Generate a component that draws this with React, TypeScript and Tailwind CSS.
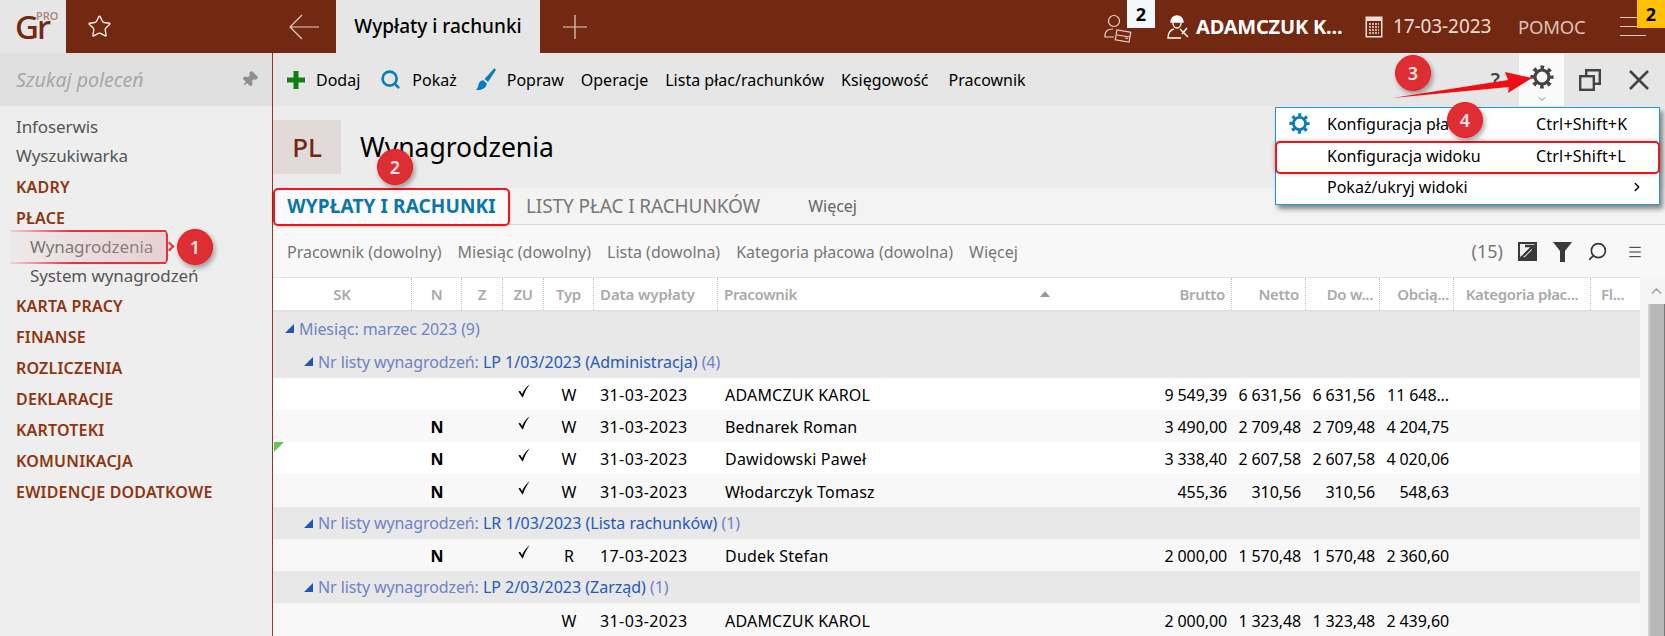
import { Search, Star, Pin, ChevronUp, ChevronDown, ChevronRight, Menu } from "lucide-react"
import type { ReactNode } from "react"

const cols = "grid grid-cols-[139px_50px_41px_41px_50px_124px_439px_75px_74px_74px_74px_137px_49px]"

const sideTop = ["Infoserwis", "Wyszukiwarka"]
const sideBottom = ["KARTA PRACY", "FINANSE", "ROZLICZENIA", "DEKLARACJE", "KARTOTEKI", "KOMUNIKACJA", "EWIDENCJE DODATKOWE"]

const headers = [
  { label: "SK", cls: "justify-center" },
  { label: "N", cls: "justify-center" },
  { label: "Z", cls: "justify-center" },
  { label: "ZU", cls: "justify-center" },
  { label: "Typ", cls: "justify-center" },
  { label: "Data wypłaty", cls: "pl-[6px] tracking-[-0.1px]" },
  { label: "Pracownik", cls: "pl-[6px] !border-r-0" },
  { label: "Brutto", cls: "justify-end pr-[6px]" },
  { label: "Netto", cls: "justify-end pr-[6px]" },
  { label: "Do w...", cls: "justify-end pr-[6px]" },
  { label: "Obcią...", cls: "justify-end pr-[4px]" },
  { label: "Kategoria płac...", cls: "justify-center" },
  { label: "Fl...", cls: "pl-[10px]" },
]

function Gear(props: { size: number; color: string; cls?: string }) {
  return (
    <svg width={props.size} height={props.size} viewBox="0 0 24 24" fill="none" stroke={props.color} className={props.cls}>
      <circle cx="12" cy="12" r="7" strokeWidth="3.2" />
      <circle cx="12" cy="12" r="9.6" strokeWidth="4" strokeDasharray="3.6 3.94" strokeDashoffset="1.8" />
    </svg>
  )
}

function CheckMark() {
  return (
    <svg width="12" height="14" viewBox="0 0 12 14" className="mx-auto mb-[8px]">
      <path d="M0.5 7.5 2 6.800 4.200 10C6 5.800 8.400 2.400 11.600 0.400 9 3.600 6.400 8.600 5 13.200H4.200Z" fill="#000" />
    </svg>
  )
}

function Row(props: { n?: boolean; check?: boolean; typ: string; date: string; name: string; vals: string[]; alt?: boolean; tall?: boolean }) {
  return (
    <div className={`${cols} w-[1367px] items-center pt-[2px] text-[16px] text-black ${props.tall ? "h-[33px]" : "h-[32px]"} ${props.alt ? "bg-[#f8f8f8]" : "bg-white"}`}>
      <div />
      <div className="text-center font-bold">{props.n ? "N" : ""}</div>
      <div />
      <div>{props.check ? <CheckMark /> : null}</div>
      <div className="text-center">{props.typ}</div>
      <div className="pl-[6px] tracking-[0.4px]">{props.date}</div>
      <div className="pl-[7px] tracking-[0.2px]">{props.name}</div>
      {props.vals.map((v, i) => (
        <div key={i} className="whitespace-nowrap pr-[5px] text-right tracking-[-0.1px]">{v}</div>
      ))}
    </div>
  )
}

function Group(props: { level: number; label?: string; value?: string; count: string; tall?: boolean }) {
  return (
    <div className={`flex w-[1367px] items-center bg-[#e8e8e8] text-[16px] tracking-[-0.1px] text-[#6f83c9] ${props.tall ? "h-[33px]" : "h-[32px]"} ${props.level === 1 ? "pl-[12px]" : "pl-[31px]"}`}>
      <svg width="9" height="9" viewBox="0 0 9 9" className="mr-[5px]"><path d="M9 0V9H0Z" fill="#1f55b8" /></svg>
      {props.label ? <span>{props.label}&nbsp;</span> : null}
      {props.value ? <span className="tracking-[0px] text-[#2459bd]">{props.value}&nbsp;</span> : null}
      <span>{props.count}</span>
    </div>
  )
}

function Callout(props: { n: number; cls: string }) {
  return (
    <div className={`absolute flex h-[36px] w-[36px] items-center justify-center rounded-full border border-[#f11] bg-[#dd2f33] text-[18px] font-semibold text-[#fbe4e4] shadow-[2px_3px_5px_rgba(0,0,0,0.35)] ${props.cls}`}>
      {props.n}
    </div>
  )
}

function ToolItem(props: { icon?: ReactNode; label: string; cls?: string }) {
  return (
    <div className={`flex items-center gap-[11px] ${props.cls ?? ""}`}>
      {props.icon}
      <span>{props.label}</span>
    </div>
  )
}

export default function App() {
  return (
    <div className="relative h-[636px] w-[1665px] overflow-hidden bg-[#f2f2f2] font-['Noto_Sans',sans-serif]">
      {/* top bar */}
      <div className="flex h-[53px] items-stretch bg-[#732811] text-white">
        <div className="relative flex w-[66px] items-center bg-[#e6e6e6] pl-[15px]">
          <span className="text-[33px] font-medium leading-none tracking-[-2px] text-[#732811]">Gr</span>
          <span className="absolute left-[36px] top-[9px] text-[11px] font-semibold leading-[14px] text-[#b08a7e]">PRO</span>
        </div>
        <div className="flex w-[223px] items-center pl-[21px]">
          <Star size={25} strokeWidth={1.3} className="text-[#fbeee8]" />
        </div>
        <div className="flex w-[47px] items-center">
          <svg width="30" height="26" viewBox="0 0 30 26" fill="none" stroke="#e8cfc6" strokeWidth="1.2"><path d="M30 13H1M13 1 1 13l12 12" /></svg>
        </div>
        <div className="flex w-[204px] items-center justify-center bg-[#e6e6e6] text-[19px] font-medium text-black">Wypłaty i rachunki</div>
        <div className="flex flex-1 items-center pl-[23px]">
          <svg width="24" height="24" viewBox="0 0 24 24" fill="none" stroke="#e8cfc6" strokeWidth="1.2"><path d="M12 0v24M0 12h24" /></svg>
        </div>
        <div className="flex items-center text-[#f0ddd6]">
          <svg width="28" height="30" viewBox="0 0 28 30" fill="none" stroke="#ecd5cc" strokeWidth="1.2" className="mt-[4px]">
            <circle cx="10" cy="7" r="5.5" />
            <path d="M9 15c-5 0-8 2-8 6v2h9" />
            <rect x="12" y="17" width="14" height="10" transform="rotate(10 19 22)" />
            <path d="M13 21l13 2M21 24l3 .5" />
          </svg>
          <div className="mb-[25px] ml-[-5px] flex h-[28px] w-[28px] items-center justify-center bg-[#f3f8fc] text-[18px] font-bold text-black">2</div>
          <svg width="24" height="26" viewBox="0 0 24 26" fill="none" stroke="#fff" strokeWidth="1.4" className="ml-[11px]">
            <path d="M5 8c0-4 3-6 6-6s6 2 6 6z" fill="#fff" />
            <path d="M7 9c0 3 2 5 4 5s4-2 4-5M8 15c-4 1-6 4-6 9h13M14 15l8 8M21 14l-5 6" />
          </svg>
          <span className="ml-[6px] w-[147px] whitespace-nowrap text-[20px] font-bold tracking-[-0.2px] text-white">ADAMCZUK K...</span>
          <svg width="18" height="22" viewBox="0 0 18 22" className="ml-[22px]">
            <rect x="0.5" y="0.5" width="17" height="21" fill="#f0ddd6" />
            <rect x="2" y="5" width="14" height="15" fill="#732811" />
            <path d="M4 8h10M4 11h10M4 14h10M4 17h10" stroke="#f0ddd6" strokeWidth="1.6" strokeDasharray="2 1" />
          </svg>
          <span className="ml-[10px] w-[98px] whitespace-nowrap text-[19px] tracking-[-0.1px]">17-03-2023</span>
          <span className="ml-[27px] w-[70px] text-[18.5px] tracking-[-0.2px] text-[#dcc2b8]">POMOC</span>
          <div className="ml-[32px] flex w-[26px] flex-col gap-[8px]">
            <div className="h-[1px] bg-[#e0c8bd]" />
            <div className="h-[1px] bg-[#e0c8bd]" />
            <div className="h-[1px] bg-[#e0c8bd]" />
          </div>
          <div className="mb-[25px] ml-[-9px] flex h-[28px] w-[28px] items-center justify-center bg-[#ffc000] text-[18px] font-bold text-black">2</div>
        </div>
      </div>

      <div className="flex h-[583px]">
        {/* sidebar */}
        <aside className="w-[272px] shrink-0 bg-[#eeeeee]">
          <div className="flex h-[53px] items-center justify-between bg-[#e0e0e0] pl-[16px] pr-[14px]">
            <span className="text-[19.5px] italic text-[#a8a8a8]">Szukaj poleceń</span>
            <Pin size={17} className="rotate-45 fill-[#8f8f8f] text-[#8f8f8f]" />
          </div>
          <div className="pl-[16px] pt-[6px] text-[17px] tracking-[-0.1px] text-[#555]">
            <div className="flex h-[29px] items-center">{sideTop[0]}</div>
            <div className="flex h-[30px] items-center">{sideTop[1]}</div>
            <div className="flex h-[31px] items-center text-[16px] font-semibold tracking-[0.2px] text-[#8f3510]">KADRY</div>
            <div className="flex h-[31px] items-center text-[16px] font-semibold tracking-[0.2px] text-[#8f3510]">PŁACE</div>
            <div className="flex h-[28px] items-center pl-[14px]">Wynagrodzenia</div>
            <div className="flex h-[29px] items-center pl-[14px]">System wynagrodzeń</div>
            {sideBottom.map((s) => (
              <div key={s} className="flex h-[31px] items-center text-[16px] font-semibold tracking-[0.2px] text-[#8f3510]">{s}</div>
            ))}
          </div>
        </aside>

        {/* main */}
        <main className="w-[1393px] border-l border-[#8b3a24]">
          <div className="flex h-[53px] items-center bg-[#e6e6e6] pl-[14px] pr-[15px] text-[16px] text-black">
            <ToolItem
              icon={<svg width="18" height="18" viewBox="0 0 18 18"><path d="M9 0v18M0 9h18" stroke="#108010" strokeWidth="5" /></svg>}
              label="Dodaj"
            />
            <ToolItem cls="ml-[20px]" icon={<Search size={21} strokeWidth={3} className="text-[#0a7db8]" />} label="Pokaż" />
            <ToolItem
              cls="ml-[18px]"
              icon={
                <svg width="21" height="23" viewBox="0 0 21 23" fill="#0a7db8">
                  <path d="M19 0.5c1.2-.2 2 .8 1.6 2L13 14 9.6 11z" />
                  <path d="M8.6 12.400l3.200 3c-.4 4.400-4.400 7-11 6.600 2.600-1.800 2-4.200 3.200-6.800 1-2 2.800-3 4.600-2.800z" />
                </svg>
              }
              label="Popraw"
            />
            <span className="ml-[17px]">Operacje</span>
            <span className="ml-[17px]">Lista płac/rachunków</span>
            <span className="ml-[17px]">Księgowość</span>
            <span className="ml-[20px]">Pracownik</span>
            <span className="ml-auto text-[20px] font-semibold text-[#444]">?</span>
            <div className="relative ml-[19px] flex h-full w-[45px] items-center justify-center bg-[#fafafa]">
              <Gear size={24} color="#444" cls="mb-[6px]" />
              <ChevronDown size={12} className="absolute bottom-[1px] text-[#888]" />
            </div>
            <svg width="22" height="22" viewBox="0 0 22 22" fill="none" stroke="#444" strokeWidth="2.400" className="ml-[15px]">
              <rect x="1.200" y="7.200" width="13.600" height="13.600" />
              <path d="M7.200 7V1.200h13.600v13.600H15" />
            </svg>
            <svg width="22" height="22" viewBox="0 0 22 22" fill="none" stroke="#444" strokeWidth="2.600" className="ml-[27px]">
              <path d="M2 2l18 18M20 2 2 20" />
            </svg>
          </div>

          <div className="flex h-[82px] flex-col bg-[#ececec]">
            <div className="mt-[14px] flex items-center">
              <div className="flex h-[54px] w-[68px] items-center justify-center bg-[#e2dad8] text-[26px] font-medium text-[#732811]">PL</div>
              <span className="ml-[19px] pt-[1px] text-[26.5px] text-black">Wynagrodzenia</span>
            </div>
          </div>

          <div className="flex h-[37px] items-center border-b border-[#d8d8d8] bg-[#f3f3f3] text-[19px]">
            <div className="flex h-full w-[237px] items-center justify-center bg-[#fafafa] font-bold tracking-[0.1px] text-[#0b76ab]">WYPŁATY I RACHUNKI</div>
            <span className="ml-[16px] tracking-[-0.1px] text-[#777]">LISTY PŁAC I RACHUNKÓW</span>
            <span className="ml-[48px] text-[16px] text-[#666]">Więcej</span>
          </div>

          <div className="flex h-[52px] items-center bg-[#f8f8f8] pl-[14px] pr-[22px] pt-[1px] text-[16px] text-[#777]">
            <span>Pracownik (dowolny)</span>
            <span className="ml-[16px]">Miesiąc (dowolny)</span>
            <span className="ml-[16px]">Lista (dowolna)</span>
            <span className="ml-[16px]">Kategoria płacowa (dowolna)</span>
            <span className="ml-[16px]">Więcej</span>
            <span className="ml-auto text-[18px]">(15)</span>
            <svg width="19" height="19" viewBox="0 0 19 19" className="ml-[15px]">
              <rect width="19" height="19" fill="#3a3a3a" />
              <path d="M2 2h15L2 15z" fill="#f0f0f0" />
              <path d="M15 4 5 14" fill="none" stroke="#fff" strokeWidth="4" />
              <path d="M7 4h8v8M15 4 5 14" fill="none" stroke="#3a3a3a" strokeWidth="2.400" />
            </svg>
            <svg width="19" height="20" viewBox="0 0 19 20" className="ml-[16px]"><path d="M0 0h19l-7 9v11H7V9z" fill="#3a3a3a" /></svg>
            <Search size={21} strokeWidth={1.8} className="ml-[15px] -scale-x-100 text-[#333]" />
            <Menu size={16} strokeWidth={1.5} className="ml-[19px] text-[#333]" />
          </div>

          <div className="flex">
            <div>
              <div className={`${cols} h-[35px] w-[1367px] border-b-2 border-t border-[#e2e2e2] bg-white text-[15px] font-semibold tracking-[-0.3px] text-[#aaaaaa]`}>
                {headers.map((h, i) => (
                  <div key={h.label} className={`flex items-center whitespace-nowrap ${i < 12 ? "border-r border-dotted border-r-[#c4c4c4]" : ""} ${h.cls}`}>
                    {h.label}
                    {h.label === "Pracownik" ? (
                      <svg width="10" height="6" viewBox="0 0 10 6" className="ml-[243px]"><path d="M5 0l5 6H0z" fill="#999" /></svg>
                    ) : null}
                  </div>
                ))}
              </div>
              <Group tall level={1} label="Miesiąc: marzec 2023" count="(9)" />
              <Group tall level={2} label="Nr listy wynagrodzeń:" value="LP 1/03/2023 (Administracja)" count="(4)" />
              <Row check typ="W" date="31-03-2023" name="ADAMCZUK KAROL" vals={["9 549,39", "6 631,56", "6 631,56", "11 648..."]} />
              <Row alt n check typ="W" date="31-03-2023" name="Bednarek Roman" vals={["3 490,00", "2 709,48", "2 709,48", "4 204,75"]} />
              <div className="relative">
                <Row n check typ="W" date="31-03-2023" name="Dawidowski Paweł" vals={["3 338,40", "2 607,58", "2 607,58", "4 020,06"]} />
                <div className="absolute left-[1px] top-0 h-0 w-0 border-r-[10px] border-t-[10px] border-r-transparent border-t-[#66c455]" />
              </div>
              <Row alt tall n check typ="W" date="31-03-2023" name="Włodarczyk Tomasz" vals={["455,36", "310,56", "310,56", "548,63"]} />
              <Group level={2} label="Nr listy wynagrodzeń:" value="LR 1/03/2023 (Lista rachunków)" count="(1)" />
              <Row alt n check typ="R" date="17-03-2023" name="Dudek Stefan" vals={["2 000,00", "1 570,48", "1 570,48", "2 360,60"]} />
              <Group level={2} label="Nr listy wynagrodzeń:" value="LP 2/03/2023 (Zarząd)" count="(1)" />
              <Row alt tall typ="W" date="31-03-2023" name="ADAMCZUK KAROL" vals={["2 000,00", "1 323,48", "1 323,48", "2 439,60"]} />
            </div>
            <div className="flex w-[25px] flex-col items-end bg-[#f5f5f5]">
              <div className="flex h-[27px] w-[17px] items-center justify-center">
                <ChevronUp size={18} className="text-[#aaa]" />
              </div>
              <div className="h-[332px] w-[17px] border-l-2 border-r border-l-[#d0d0d0] border-r-[#777] bg-[#b8b8b8]" />
            </div>
          </div>
        </main>
      </div>

      {/* dropdown menu */}
      <div className="absolute left-[1275px] top-[107px] w-[385px] border border-[#1c9ad6] bg-white text-[16px] text-black shadow-[3px_4px_5px_rgba(0,0,0,0.45)]">
        <div className="flex h-[33px] items-center pb-[2px]">
          <Gear size={21} color="#0a7db8" cls="ml-[13px]" />
          <span className="ml-[17px] w-[209px]">Konfiguracja płac</span>
          <span className="tracking-[0.2px]">Ctrl+Shift+K</span>
        </div>
        <div className="flex h-[32px] items-center pb-[2px] pl-[51px]">
          <span className="w-[209px]">Konfiguracja widoku</span>
          <span className="tracking-[0.2px]">Ctrl+Shift+L</span>
        </div>
        <div className="flex h-[31px] items-center justify-between pb-[4px] pl-[51px] pr-[15px]">
          <span>Pokaż/ukryj widoki</span>
          <ChevronRight size={14} strokeWidth={2.5} />
        </div>
      </div>

      {/* annotations */}
      <div className="absolute left-[1275px] top-[141px] h-[33px] w-[385px] rounded-[5px] border-2 border-[#e8171f] shadow-[0_0_4px_rgba(0,0,0,0.25)]" />
      <div className="absolute left-[273px] top-[188px] h-[38px] w-[237px] rounded-[5px] border-2 border-[#f0141c] shadow-[0_1px_3px_rgba(0,0,0,0.2)]" />
      <div className="absolute left-[10px] top-[230px] h-[34px] w-[158px] rounded-r-[5px] border-r-2 border-[#e8303a] bg-gradient-to-r from-[#e8d8d8]/20 to-[#e0b4b6]/50">
        <div className="h-[2px] bg-gradient-to-r from-[#e8303a]/10 to-[#e8303a] to-40%" />
        <div className="absolute bottom-0 h-[2px] w-full bg-gradient-to-r from-[#e8303a]/10 to-[#e8303a] to-40%" />
      </div>
      <div className="absolute left-[166px] top-[243px] h-[7px] w-[7px] rotate-45 border-r-2 border-t-2 border-[#e8303a]" />
      <Callout n={1} cls="left-[177px] top-[229px]" />
      <Callout n={2} cls="left-[377px] top-[149px]" />
      <Callout n={3} cls="left-[1395px] top-[55px]" />
      <Callout n={4} cls="left-[1447px] top-[102px]" />
      <svg width="150" height="32" viewBox="0 0 150 32" className="absolute left-[1390px] top-[70px]">
        <path d="M2 28 118 10 115 2 142 8 118 23 119 17Z" fill="#f20d12" />
      </svg>
    </div>
  )
}
